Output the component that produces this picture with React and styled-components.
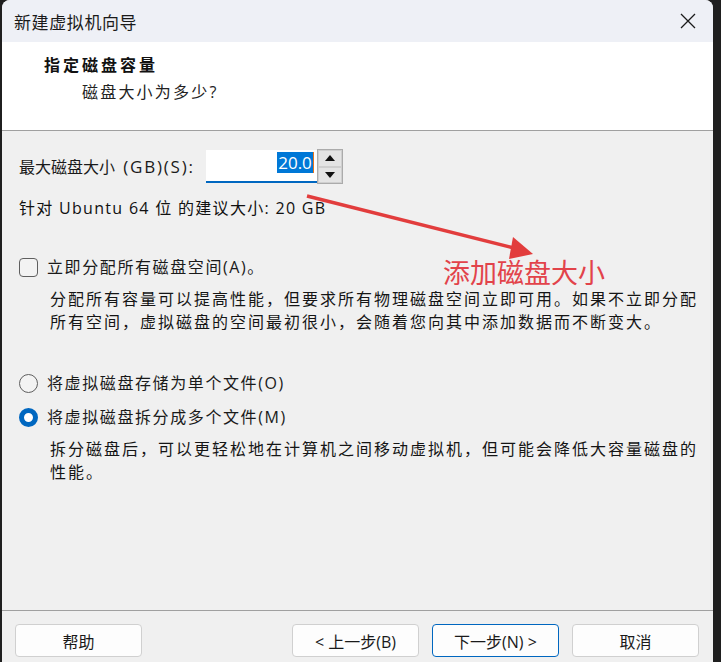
import React from 'react'
import styled, { createGlobalStyle } from 'styled-components'

const GlobalStyle = createGlobalStyle`
    *, *::before, *::after {
        box-sizing: border-box;
    }
    html, body {
        margin: 0;
        padding: 0;
        background: #1f1f1f;
        overflow: hidden;
    }
    body {
        font-family: "Open Sans", "Noto Sans CJK SC", sans-serif;
        color: #1a1a1a;
    }
`

function App() {
    return (
        <>
            <GlobalStyle />
            <Page>
                <Window>
                    <TitleBar>
                        <span>新建虚拟机向导</span>
                        <CloseButton aria-label='关闭'>
                            <svg width='16' height='16' viewBox='0 0 16 16'>
                                <path d='M1 1 L15 15 M15 1 L1 15' stroke='#1a1a1a' strokeWidth='1.3' fill='none' />
                            </svg>
                        </CloseButton>
                    </TitleBar>

                    <Header>
                        <Heading>指定磁盘容量</Heading>
                        <SubHeading>磁盘大小为多少?</SubHeading>
                    </Header>

                    <Body>
                        <SizeRow>
                            <span>最大磁盘大小<Latin> (GB)(S):</Latin></span>
                            <NumberBox>
                                <Selected>20.0</Selected>
                                <Caret />
                            </NumberBox>
                            <Spinner>
                                <SpinButton>
                                    <svg width='10' height='6' viewBox='0 0 10 6'><path d='M0 6 L5 0 L10 6 Z' fill='#111' /></svg>
                                </SpinButton>
                                <SpinButton>
                                    <svg width='10' height='6' viewBox='0 0 10 6'><path d='M0 0 L5 6 L10 0 Z' fill='#111' /></svg>
                                </SpinButton>
                            </Spinner>
                        </SizeRow>

                        <Hint>针对 Ubuntu 64 位 的建议大小: 20 GB</Hint>

                        <OptionRow $top={37}>
                            <CheckBox />
                            <OptionLabel>立即分配所有磁盘空间(A)。</OptionLabel>
                        </OptionRow>
                        <Description>
                            <span>分配所有容量可以提高性能，但要求所有物理磁盘空间立即可用。如果不立即分配</span>
                            <span>所有空间，虚拟磁盘的空间最初很小，会随着您向其中添加数据而不断变大。</span>
                        </Description>

                        <OptionRow $top={38}>
                            <Radio />
                            <OptionLabel>将虚拟磁盘存储为单个文件(O)</OptionLabel>
                        </OptionRow>
                        <OptionRow $top={12}>
                            <Radio $checked />
                            <OptionLabel>将虚拟磁盘拆分成多个文件(M)</OptionLabel>
                        </OptionRow>
                        <Description>
                            <span>拆分磁盘后，可以更轻松地在计算机之间移动虚拟机，但可能会降低大容量磁盘的</span>
                            <span>性能。</span>
                        </Description>
                    </Body>

                    <Footer>
                        <Button>帮助</Button>
                        <ButtonGroup>
                            <Button>&lt; 上一步(B)</Button>
                            <Button $primary>下一步(N) &gt;</Button>
                            <Button>取消</Button>
                        </ButtonGroup>
                    </Footer>

                    {/* red note drawn over the dialog */}
                    <Arrow width='711' height='300' viewBox='0 0 711 300'>
                        <line x1='305' y1='196' x2='512' y2='248' stroke='#e23d3d' strokeWidth='3.5' />
                        <path d='M531 254 L511 237 L507 259 Z' fill='#e23d3d' />
                    </Arrow>
                    <Note>添加磁盘大小</Note>
                </Window>
            </Page>
        </>
    )
}

const Page = styled.div`
    height: 662px;
    padding-left: 2px;
`

const Window = styled.div`
    position: relative;
    width: 711px;
    height: 662px;
    display: flex;
    flex-direction: column;
    background: #f0f0f0;
    border-radius: 8px 8px 0 0;
    overflow: hidden;
`

const TitleBar = styled.div`
    height: 42px;
    flex-shrink: 0;
    display: flex;
    align-items: center;
    justify-content: space-between;
    padding: 0 16px 0 12px;
    background: #eef0f6;
    font-size: 17px;
    letter-spacing: 0.6px;
    color: #1a1a1a;
`

const CloseButton = styled.div`
    display: flex;
    align-items: center;
    justify-content: center;
    width: 16px;
    height: 16px;
    margin-right: 1px;
`

const Header = styled.div`
    height: 89px;
    flex-shrink: 0;
    background: #ffffff;
    border-bottom: 1px solid #a0a0a0;
    padding: 12px 0 0 42px;
`

const Heading = styled.div`
    font-size: 16px;
    font-weight: 700;
    line-height: 22px;
    letter-spacing: 3px;
    color: #111;
`

const SubHeading = styled.div`
    margin: 5px 0 0 38px;
    font-size: 16px;
    line-height: 22px;
    letter-spacing: 2.2px;
    color: #222;
`

const Body = styled.div`
    flex: 1;
    padding: 18px 0 0 17px;
    font-size: 16px;
`

const SizeRow = styled.div`
    display: flex;
    align-items: center;
    height: 35px;
    span {
        line-height: 22px;
    }
`

const Latin = styled.span`
    font-size: 17px;
    letter-spacing: 1.8px;
    padding-left: 2px;
`

const NumberBox = styled.div`
    width: 111px;
    height: 33px;
    margin-left: 11px;
    display: flex;
    align-items: flex-start;
    justify-content: flex-end;
    padding: 2px 3px 0 0;
    background: #ffffff;
    border-bottom: 2px solid #0067c0;
`

const Selected = styled.span`
    height: 21px;
    line-height: 21px;
    padding: 0 1px;
    background: #0078d7;
    color: #ffffff;
    font-size: 17px;
`

const Caret = styled.span`
    width: 1px;
    height: 21px;
    background: #e8741b;
`

const Spinner = styled.div`
    width: 26px;
    height: 35px;
    border: 1px solid #ababab;
    display: flex;
    flex-direction: column;
    background: #f0f0f0;
`

const SpinButton = styled.div`
    flex: 1;
    display: flex;
    align-items: center;
    justify-content: center;
    background: #e4e4e4;
    border: 1px solid #cfcfcf;
`

const Hint = styled.div`
    margin-top: 13px;
    line-height: 22px;
    letter-spacing: 1.3px;
    color: #111;
`

const OptionRow = styled.div`
    display: flex;
    align-items: center;
    height: 22px;
    margin-top: ${p => p.$top}px;
`

const CheckBox = styled.span`
    width: 19px;
    height: 19px;
    border: 1.5px solid #5f5f5f;
    border-radius: 4px;
    background: #f3f3f3;
`

const Radio = styled.span`
    width: 19px;
    height: 19px;
    border-radius: 50%;
    border: ${p => (p.$checked ? '5.5px solid #0067c0' : '1.5px solid #5f5f5f')};
    background: ${p => (p.$checked ? '#ffffff' : '#f3f3f3')};
`

const OptionLabel = styled.span`
    margin-left: 9px;
    letter-spacing: 1.6px;
    line-height: 22px;
`

const Description = styled.div`
    display: flex;
    flex-direction: column;
    margin: 10px 0 0 31px;
    line-height: 23px;
    letter-spacing: 2px;
    white-space: nowrap;
    color: #151515;
`

const Footer = styled.div`
    height: 52px;
    flex-shrink: 0;
    border-top: 1px solid #a0a0a0;
    display: flex;
    align-items: flex-start;
    padding: 13px 14px 0 13px;
`

const ButtonGroup = styled.div`
    display: flex;
    gap: 13px;
    margin-left: auto;
`

const Button = styled.button`
    width: 127px;
    height: 33px;
    border-radius: 4px;
    background: #fdfdfd;
    border: 1px solid ${p => (p.$primary ? '#0067c0' : '#d0d0d0')};
    font-family: "Open Sans", "Noto Sans CJK SC", sans-serif;
    font-size: 16px;
    color: #1a1a1a;
    padding: 0;
`

const Arrow = styled.svg`
    position: absolute;
    left: 0;
    top: 0;
    pointer-events: none;
`

const Note = styled.div`
    position: absolute;
    left: 441px;
    top: 259px;
    font-family: "Noto Sans CJK SC", sans-serif;
    font-size: 27px;
    line-height: 26px;
    color: #e2434a;
`

export default App
